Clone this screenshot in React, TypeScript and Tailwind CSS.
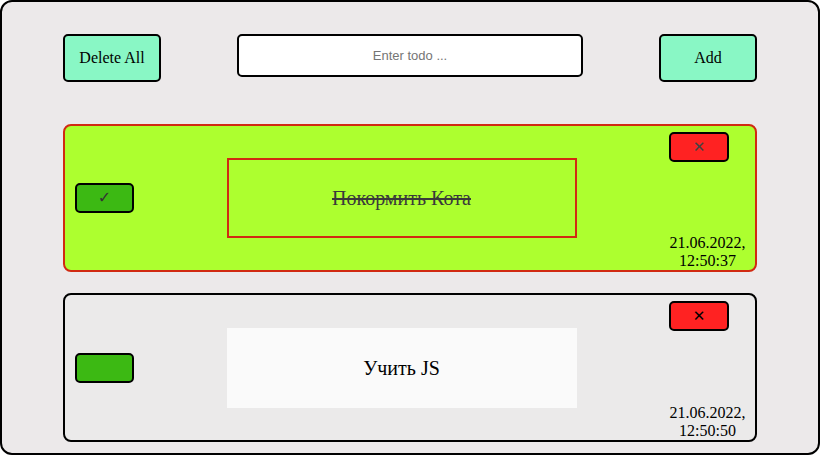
import { useState } from "react";

type Todo = {
  id: number;
  text: string;
  done: boolean;
  date: string;
  time: string;
};

const initialTodos: Todo[] = [
  { id: 1, text: "Покормить Кота", done: true, date: "21.06.2022,", time: "12:50:37" },
  { id: 2, text: "Учить JS", done: false, date: "21.06.2022,", time: "12:50:50" },
];

export default function App() {
  const [todos, setTodos] = useState<Todo[]>(initialTodos);
  const [value, setValue] = useState("");

  const toggle = (id: number) => {
    setTodos(todos.map((t) => (t.id === id ? { ...t, done: !t.done } : t)));
  };

  const remove = (id: number) => {
    setTodos(todos.filter((t) => t.id !== id));
  };

  return (
    <div className="w-[821px] h-[456px] bg-white [font-family:'Liberation_Serif',serif]">
      <div className="w-[820px] h-[455px] border-2 border-black rounded-[12px] bg-[#ece9ea] px-[61px] pt-[32px]">
        <div className="flex items-start justify-between">
          <button
            onClick={() => setTodos([])}
            className="w-[98px] h-[48px] bg-[#89f7c5] border-2 border-black rounded-[5px] text-[16px] text-black [font-family:'Liberation_Serif',serif]"
          >
            Delete All
          </button>

          <input
            type="text"
            placeholder="Enter todo ..."
            value={value}
            onChange={(e) => setValue(e.target.value)}
            className="w-[346px] h-[43px] bg-white border-2 border-black rounded-[5px] text-center text-[13px] [font-family:'Liberation_Sans',sans-serif] placeholder:text-[#757575] outline-none"
          />

          <button className="w-[98px] h-[48px] bg-[#89f7c5] border-2 border-black rounded-[5px] text-[16px] text-black [font-family:'Liberation_Serif',serif]">
            Add
          </button>
        </div>

        <div className="mt-[42px] flex flex-col gap-[21px]">
          {todos.map((todo) => (
            <div
              key={todo.id}
              className={
                todo.done
                  ? "h-[148px] flex items-center justify-between border-2 border-[#d12a12] rounded-[8px] bg-[#adff2f] pl-[10px] pr-[9px]"
                  : "h-[149px] flex items-center justify-between border-2 border-black rounded-[8px] bg-[#ebeaea] pl-[10px] pr-[9px]"
              }
            >
              <button
                onClick={() => toggle(todo.id)}
                className="w-[59px] h-[30px] bg-[#3cb913] border-2 border-black rounded-[5px] text-[16px] text-[#333] [font-family:'DejaVu_Sans',sans-serif] leading-none"
              >
                {todo.done ? "✓" : ""}
              </button>

              <div
                className={
                  todo.done
                    ? "w-[350px] h-[80px] flex items-center justify-center border-2 border-[#d12a12] text-[20px] text-[#3a3a3a] line-through"
                    : "w-[350px] h-[80px] flex items-center justify-center bg-[#fafafa] text-[20px] text-black"
                }
              >
                {todo.text}
              </div>

              <div className="self-stretch flex flex-col justify-between pt-[6px] w-[77px]">
                <button
                  onClick={() => remove(todo.id)}
                  className={
                    todo.done
                      ? "w-[60px] h-[30px] bg-[#ff2222] border-2 border-black rounded-[5px] text-[15px] text-[#444] [font-family:'DejaVu_Sans',sans-serif] leading-none"
                      : "w-[60px] h-[30px] bg-[#ff2222] border-2 border-black rounded-[5px] text-[15px] text-black [font-family:'DejaVu_Sans',sans-serif] leading-none"
                  }
                >
                  ✕
                </button>
                <div className="text-center text-[16px] leading-[18px] text-black">
                  <div>{todo.date}</div>
                  <div>{todo.time}</div>
                </div>
              </div>
            </div>
          ))}
        </div>
      </div>
    </div>
  );
}
